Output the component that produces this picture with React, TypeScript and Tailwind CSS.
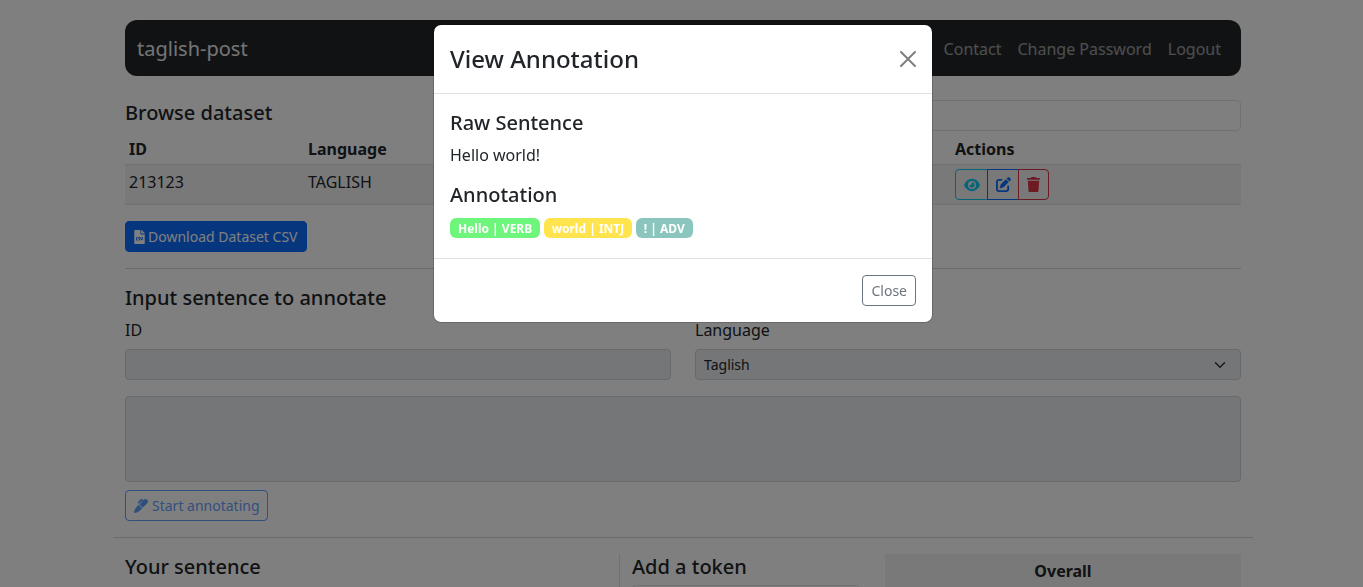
import { FaEye, FaPenToSquare, FaTrash } from "react-icons/fa6";
import { FaFileCsv, FaMarker } from "react-icons/fa";

const tags = [
  { label: "Hello | VERB", bg: "bg-[#6ef57c]" },
  { label: "world | INTJ", bg: "bg-[#ffe44d]" },
  { label: "! | ADV", bg: "bg-[#8ac6bd]" },
];

const Navbar = () => (
  <nav className="flex h-14 items-center justify-between rounded-xl bg-[#212529] pl-3 pr-5 pt-px">
    <span className="text-xl text-white/90">taglish-post</span>
    <div className="flex gap-4 text-white/[.55]">
      <span>Contact</span>
      <span>Change Password</span>
      <span>Logout</span>
    </div>
  </nav>
);

const DatasetTable = () => (
  <div className="mt-6">
    <div className="flex h-[31px] items-start justify-between">
      <h5 className="text-xl font-medium leading-[26px]">Browse dataset</h5>
      <input className="h-[31px] w-[558px] rounded border border-[#dee2e6] bg-white" />
    </div>
    <div className="mt-[2px] grid grid-cols-[179px_647px_1fr] border-b border-[#dee2e6]">
      <div className="h-[32px] border-b border-[#dee2e6] px-1 font-bold leading-[32px]">ID</div>
      <div className="h-[32px] border-b border-[#dee2e6] px-1 font-bold leading-[32px]">Language</div>
      <div className="h-[32px] border-b border-[#dee2e6] px-1 font-bold leading-[32px]">Actions</div>
      <div className="h-[39px] bg-black/5 px-1 pt-[5px]">213123</div>
      <div className="h-[39px] bg-black/5 px-1 pt-[5px]">TAGLISH</div>
      <div className="flex h-[39px] items-center bg-black/5 px-1">
        <div className="flex h-[31px]">
          <button className="flex w-[33px] items-center justify-center rounded-l border border-[#0dcaf0] text-[#0dcaf0]">
            <FaEye size={16} />
          </button>
          <button className="-ml-px flex w-[32px] items-center justify-center border border-[#0d6efd] text-[#0d6efd]">
            <FaPenToSquare size={15} />
          </button>
          <button className="-ml-px flex w-[31px] items-center justify-center rounded-r border border-[#dc3545] text-[#dc3545]">
            <FaTrash size={15} />
          </button>
        </div>
      </div>
    </div>
    <button className="mt-4 flex h-[31px] w-[182px] items-center gap-[3px] whitespace-nowrap rounded border border-[#0d6efd] bg-[#0d6efd] px-2 text-sm text-white">
      <FaFileCsv className="h-[14px] w-[11px]" />
      Download Dataset CSV
    </button>
  </div>
);

const AnnotateForm = () => (
  <div className="pt-px">
    <h5 className="text-xl font-medium leading-6">Input sentence to annotate</h5>
    <div className="mt-2 grid grid-cols-2 gap-6">
      <div>
        <label className="block">ID</label>
        <input className="mt-[7px] block h-[31px] w-full rounded border border-[#ced4da] bg-[#e9ecef]" />
      </div>
      <div>
        <label className="block">Language</label>
        <div className="mt-[7px] flex h-[31px] items-center justify-between rounded border border-[#ced4da] bg-[#e9ecef] pl-2 pr-3 text-sm">
          Taglish
          <svg width="16" height="16" viewBox="0 0 16 16" fill="none" stroke="#343a40" strokeWidth="2" strokeLinecap="round" strokeLinejoin="round" className="scale-[.75]">
            <path d="m2 5 6 6 6-6" />
          </svg>
        </div>
      </div>
    </div>
    <div className="mt-4 h-[86px] rounded border border-[#ced4da] bg-[#e9ecef]" />
    <button className="mt-2 flex h-[31px] w-[143px] items-center gap-1 whitespace-nowrap rounded border border-[#0d6efd] px-2 text-sm text-[#0d6efd] opacity-65">
      <FaMarker size={14} className="shrink-0" />
      Start annotating
    </button>
  </div>
);

const BottomRow = () => (
  <div className="mt-4 flex px-3">
    <h5 className="w-[494px] pt-[1px] text-xl font-medium leading-6">Your sentence</h5>
    <div className="w-[266px] border-l border-[#dee2e6] pl-3 pt-[1px]">
      <h5 className="text-xl font-medium leading-6">Add a token</h5>
      <div className="mt-[6px] h-[31px] w-[228px] rounded border border-[#dee2e6]" />
    </div>
    <div className="h-[60px] flex-1 bg-black/5 pt-[5px] text-center font-bold">Overall</div>
  </div>
);

const ViewModal = () => (
  <div className="fixed inset-0 bg-black/50">
    <div className="ml-[433px] mt-[24px] w-[500px] rounded-lg border border-black/[.175] bg-white bg-clip-padding">
      <div className="flex h-[69px] items-center justify-between border-b border-[#dee2e6] px-4">
        <h5 className="text-2xl font-medium">View Annotation</h5>
        <svg width="16" height="16" viewBox="0 0 16 16" fill="#000" fillOpacity=".5">
          <path d="M.293.293a1 1 0 0 1 1.414 0L8 6.586 14.293.293a1 1 0 1 1 1.414 1.414L9.414 8l6.293 6.293a1 1 0 0 1-1.414 1.414L8 9.414l-6.293 6.293a1 1 0 0 1-1.414-1.414L6.586 8 .293 1.707a1 1 0 0 1 0-1.414" />
        </svg>
      </div>
      <div className="h-[165px] border-b border-[#dee2e6] px-4 pt-[17px]">
        <h5 className="text-xl font-medium leading-6">Raw Sentence</h5>
        <p className="mt-2">Hello world!</p>
        <h5 className="mt-[16px] text-xl font-medium leading-6">Annotation</h5>
        <div className="mt-[11px] flex gap-[3.5px]">
          {tags.map((tag) => (
            <span key={tag.label} className={`${tag.bg} rounded-md px-2 pb-[2px] pt-[4px] text-xs font-bold leading-[14px] text-white`}>
              {tag.label}
            </span>
          ))}
        </div>
      </div>
      <div className="flex h-[63px] items-center justify-end px-4">
        <button className="flex h-[31px] items-center rounded border border-[#6c757d] px-2 text-sm text-[#6c757d]">Close</button>
      </div>
    </div>
  </div>
);

const App = () => (
  <div className="h-screen overflow-hidden bg-white font-['Noto_Sans',sans-serif] text-[#212529]">
    <div className="ml-[113px] w-[1140px] pt-5">
      <div className="px-3">
        <Navbar />
        <DatasetTable />
        <hr className="my-4 border-[#d5d6d7]" />
        <AnnotateForm />
      </div>
      <hr className="mt-4 border-[#d5d6d7]" />
      <BottomRow />
    </div>
    <ViewModal />
  </div>
);

export default App;
